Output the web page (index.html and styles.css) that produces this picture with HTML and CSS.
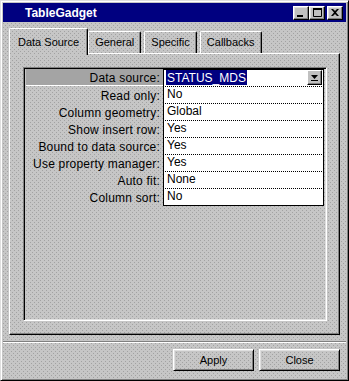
FILE: index.html
```html
<!DOCTYPE html>
<html>
  <head>
    <meta charset="utf-8">
    <link rel="stylesheet" href="styles.css">
  </head>
  <body>
    <div class="window stipple">
      <div class="titlebar">
        <span class="title">TableGadget</span>
        <div class="caption-buttons">
          <span class="cap-btn">
            <svg width="6" height="2" viewBox="0 0 6 2"><rect x="0" y="0" width="6" height="2" fill="#000"/></svg>
          </span>
          <span class="cap-btn">
            <svg width="9" height="9" viewBox="0 0 9 9"><path d="M0.5 1.5h8v7h-8z" fill="none" stroke="#000"/><rect x="0" y="0" width="9" height="2" fill="#000"/></svg>
          </span>
          <span class="cap-btn close">
            <svg width="8" height="7" viewBox="0 0 8 7"><path d="M0 0h2l2 2l2-2h2l-3 3.5l3 3.5h-2l-2-2l-2 2h-2l3-3.5z" fill="#000"/></svg>
          </span>
        </div>
      </div>

      <div class="content">
        <div class="tabs">
          <div class="tab active stipple">Data Source</div>
          <div class="tab stipple">General</div>
          <div class="tab stipple">Specific</div>
          <div class="tab stipple">Callbacks</div>
        </div>
        <div class="panel stipple">
          <div class="well">
            <div class="props">
              <div class="label current">Data source:</div>
              <div class="value first">
                <span class="selection">STATUS_MDS</span>
                <span class="drop-btn">
                  <svg width="7" height="6" viewBox="0 0 7 6"><path d="M0 0h7l-3.5 4z" fill="#000"/><rect x="0" y="5" width="7" height="1" fill="#000"/></svg>
                </span>
              </div>
              <div class="label">Read only:</div>
              <div class="value">No</div>
              <div class="label">Column geometry:</div>
              <div class="value">Global</div>
              <div class="label">Show insert row:</div>
              <div class="value">Yes</div>
              <div class="label">Bound to data source:</div>
              <div class="value">Yes</div>
              <div class="label">Use property manager:</div>
              <div class="value">Yes</div>
              <div class="label">Auto fit:</div>
              <div class="value">None</div>
              <div class="label">Column sort:</div>
              <div class="value last">No</div>
            </div>
          </div>
        </div>
      </div>

      <div class="separator"></div>

      <div class="footer">
        <button class="btn stipple">Apply</button>
        <button class="btn stipple">Close</button>
      </div>
    </div>
  </body>
</html>
```

FILE: styles.css
```css
body {
  margin: 0;
  font-family: "Liberation Sans", Arial, sans-serif;
  font-size: 11px;
  color: #000;
}

/* grey dotted fill used on every raised surface */
.stipple {
  background-color: #c6c6c6;
  background-image:
    conic-gradient(at 1px 1px, transparent 75%, #a2a2a2 0),
    conic-gradient(at 1px 1px, transparent 75%, #a2a2a2 0);
  background-size: 4px 4px;
  background-position: 0 0, 2px 2px;
}

.window {
  box-sizing: border-box;
  width: 349px;
  height: 381px;
  display: flex;
  flex-direction: column;
  padding: 2px;
  border: 1px solid;
  border-color: #dfdfdf #000 #000 #dfdfdf;
  box-shadow: inset 1px 1px #fff, inset -1px -1px #808080;
}

/* title bar */

.titlebar {
  height: 19px;
  flex: none;
  display: flex;
  align-items: center;
  background: #000080;
}

.title {
  padding-left: 22px;
  color: #fff;
  font-weight: bold;
  font-size: 12px;
}

.caption-buttons {
  margin-left: auto;
  padding-right: 3px;
  display: flex;
}

.cap-btn {
  box-sizing: border-box;
  width: 16px;
  height: 14px;
  display: flex;
  align-items: center;
  justify-content: center;
  background: #c0c0c0;
  border: 1px solid;
  border-color: #fff #000 #000 #fff;
  box-shadow: inset -1px -1px #808080, inset 1px 1px #dfdfdf;
}

.cap-btn:first-child {
  align-items: flex-end;
  justify-content: flex-start;
  padding: 0 0 2px 3px;
}

.cap-btn.close {
  margin-left: 2px;
}

/* tabs + page */

.content {
  flex: 1;
  display: flex;
  flex-direction: column;
  padding: 6px 6px 0;
}

.tabs {
  height: 25px;
  flex: none;
  display: flex;
  align-items: flex-end;
}

.tab {
  box-sizing: border-box;
  height: 22px;
  padding: 2px 6px 0;
  margin-left: 3px;
  line-height: 16px;
  border: 1px solid;
  border-bottom: none;
  border-color: #fff #000 #000 #fff;
  border-radius: 2px 2px 0 0;
  box-shadow: inset -1px 0 #808080;
  white-space: nowrap;
}

.tab.active {
  position: relative;
  z-index: 1;
  height: 27px;
  margin: 0 0 -2px 0;
  padding: 5px 8px 0;
}

.tab.active + .tab {
  margin-left: 0;
}

.panel {
  flex: 1;
  display: flex;
  padding: 13px 12px 13px 13px;
  border: 1px solid;
  border-color: #fff #000 #000 #fff;
  box-shadow: inset -1px -1px #808080;
}

.well {
  flex: 1;
  padding: 1px 2px;
  border: 1px solid;
  border-color: #808080 #fff #fff #808080;
  box-shadow: inset 1px 1px #000, inset -1px -1px #dfdfdf;
}

/* property sheet */

.props {
  display: grid;
  grid-template-columns: 137px 161px;
  font-size: 12px;
  line-height: 14px;
}

.label {
  align-self: start;
  height: 17px;
  box-sizing: border-box;
  padding: 2px 3px 0 0;
  text-align: right;
  letter-spacing: 0.2px;
  white-space: nowrap;
}

.label.current {
  height: 17px;
  background: #a4a4a4;
  border-bottom: 1px solid #fff;
}

.value {
  box-sizing: border-box;
  height: 17px;
  padding: 0 0 0 3px;
  background: #fff;
  border-left: 1px solid #000;
  border-right: 1px solid #000;
  border-bottom: 1px dotted #000;
  white-space: nowrap;
}

.value.first {
  height: 18px;
  display: flex;
  align-items: flex-start;
  border-top: 1px solid #000;
}

.value.last {
  border-bottom-style: solid;
}

.selection {
  margin-left: -1px;
  padding: 1px 1px 0;
  height: 14px;
  background: #000080;
  color: #fff;
}

.drop-btn {
  box-sizing: border-box;
  width: 15px;
  height: 15px;
  margin-left: auto;
  margin-right: 1px;
  display: flex;
  align-items: center;
  justify-content: center;
  background: #c0c0c0;
  border: 1px solid;
  border-color: #fff #000 #000 #fff;
  box-shadow: inset -1px -1px #808080;
}

/* bottom */

.separator {
  flex: none;
  margin-top: 6px;
  border-top: 1px solid #808080;
  border-bottom: 1px solid #fff;
}

.footer {
  flex: none;
  display: flex;
  justify-content: flex-end;
  gap: 5px;
  padding: 6px 6px 7px;
}

.btn {
  box-sizing: border-box;
  width: 81px;
  height: 22px;
  padding: 0;
  font: inherit;
  line-height: 16px;
  color: #000;
  border: 1px solid;
  border-color: #fff #000 #000 #fff;
  box-shadow: inset 1px 1px #dfdfdf, inset -1px -1px #808080;
}
```
